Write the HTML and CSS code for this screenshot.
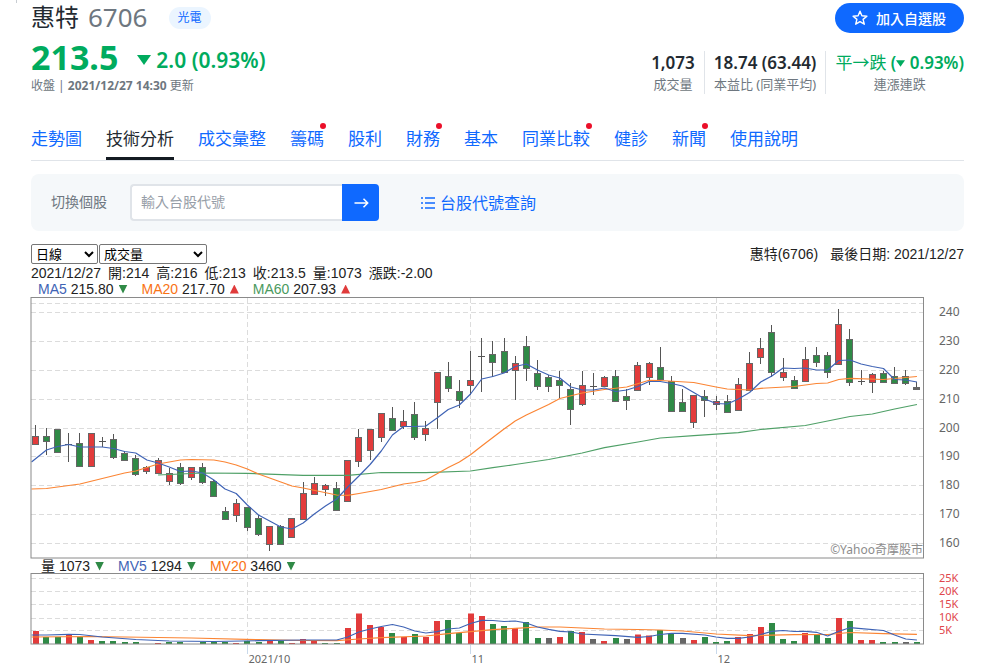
FILE: index.html
```html
<!DOCTYPE html>
<html lang="zh-Hant">
<head>
<meta charset="utf-8">
<title>惠特 6706</title>
<link rel="stylesheet" href="styles.css">
</head>
<body>
<div class="page">
  <header class="head">
    <div class="title-row">
      <h1 class="name">惠特</h1>
      <span class="code">6706</span>
      <a class="tag" href="#">光電</a>
      <button class="follow" type="button">
        <svg class="star" viewBox="0 0 16 16" aria-hidden="true"><path d="M8 1.200l1.900 4.600 5 .4-3.800 3.200 1.200 4.800L8 11.600l-4.300 2.600 1.200-4.800L1.100 6.200l5-.4z"/></svg>
        加入自選股
      </button>
    </div>
    <div class="quote-row">
      <div class="quote">
        <div class="price-line">
          <span class="price">213.5</span>
          <span class="change"><svg class="drop" viewBox="0 0 14 10" aria-hidden="true"><path d="M0 0h14L7 10z"/></svg>2.0 (0.93%)</span>
        </div>
        <div class="updated">收盤 | <b>2021/12/27 14:30</b> 更新</div>
      </div>
      <dl class="stats">
        <div class="stat"><dt>成交量</dt><dd>1,073</dd></div>
        <div class="stat"><dt>本益比 (同業平均)</dt><dd>18.74 (63.44)</dd></div>
        <div class="stat stat-down"><dt>連漲連跌</dt><dd><span class="streak">平→跌</span> (<svg class="drop-small" viewBox="0 0 14 10" aria-hidden="true"><path d="M0 0h14L7 10z"/></svg> 0.93%)</dd></div>
      </dl>
    </div>
  </header>

  <nav class="tabs">
    <a class="tab" href="#">走勢圖</a>
    <a class="tab tab-on" href="#">技術分析</a>
    <a class="tab" href="#">成交彙整</a>
    <a class="tab tab-new" href="#">籌碼</a>
    <a class="tab" href="#">股利</a>
    <a class="tab tab-new" href="#">財務</a>
    <a class="tab" href="#">基本</a>
    <a class="tab tab-new" href="#">同業比較</a>
    <a class="tab" href="#">健診</a>
    <a class="tab tab-new" href="#">新聞</a>
    <a class="tab" href="#">使用說明</a>
  </nav>

  <form class="search">
    <label class="search-label" for="stock">切換個股</label>
    <div class="search-box">
      <input class="search-input" id="stock" type="text" placeholder="輸入台股代號">
      <button class="search-go" type="button" aria-label="查詢">
        <svg class="arrow" viewBox="0 0 16 16" aria-hidden="true"><path d="M1.500 8h13M10.500 3.800L14.700 8l-4.200 4.200"/></svg>
      </button>
    </div>
    <a class="lookup" href="#">
      <svg class="list" viewBox="0 0 16 14" aria-hidden="true"><path d="M1 2h2M5 2h10M1 7h2M5 7h10M1 12h2M5 12h10"/></svg>
      <span class="lookup-text">台股代號查詢</span>
    </a>
  </form>

  <main class="chart">
    <div class="controls">
      <select class="pick" aria-label="週期"><option>日線</option></select>
      <select class="pick pick-wide" aria-label="指標"><option>成交量</option></select>
      <div class="chart-title"><span>惠特(6706)</span><span>最後日期: 2021/12/27</span></div>
    </div>
    <div class="ohlc"><span>2021/12/27</span><span>開:214</span><span>高:216</span><span>低:213</span><span>收:213.5</span><span>量:1073</span><span>漲跌:-2.00</span></div>
    <div class="legend">
      <span class="key"><span class="blue">MA5</span> 215.80<i class="mark mark-down"></i></span>
      <span class="key"><span class="orange">MA20</span> 217.70<i class="mark mark-up"></i></span>
      <span class="key"><span class="green">MA60</span> 207.93<i class="mark mark-up"></i></span>
    </div>
    <svg class="plot" id="price-plot" viewBox="31 297 933 262" role="img" aria-label="日線圖"></svg>
    <div class="legend legend-volume">
      <span class="key">量 1073<i class="mark mark-down"></i></span>
      <span class="key"><span class="blue">MV5</span> 1294<i class="mark mark-down"></i></span>
      <span class="key"><span class="orange">MV20</span> 3460<i class="mark mark-down"></i></span>
    </div>
    <svg class="plot" id="volume-plot" viewBox="31 573 933 94" role="img" aria-label="成交量圖"></svg>
  </main>
</div>
<script src="chart.js"></script>
</body>
</html>
```

FILE: styles.css
```css
* { box-sizing: border-box; }

body {
  margin: 0;
  background: #fff;
  color: #232a31;
  font-family: "Noto Sans", "Noto Sans CJK TC", sans-serif;
  overflow-x: hidden;
}

a { color: #0f69ff; text-decoration: none; }
button, input, select { font: inherit; margin: 0; }
h1, dl, dd { margin: 0; }

.page { position: relative; padding: 0 36px 0 31px; }

.page::before {
  content: "";
  position: absolute;
  left: 16px;
  top: 0;
  width: 1px;
  height: 3px;
  background: #c8cdd2;
}

/* Header */
.title-row { display: flex; align-items: center; height: 36px; }
.name { font-size: 24px; line-height: 32px; font-weight: 400; padding-bottom: 2px; }
.code { margin-left: 9px; font-size: 26px; line-height: 32px; padding-bottom: 2px; color: #6e7780; }
.tag {
  margin-left: 21px;
  padding: 0 9px;
  border-radius: 11px;
  background: #ebf5ff;
  font-size: 12px;
  line-height: 22px;
}
.follow {
  display: flex;
  align-items: center;
  gap: 8px;
  height: 30px;
  margin-left: auto;
  padding: 0 18px 0 17px;
  border: 0;
  border-radius: 15px;
  background: #0f69ff;
  color: #fff;
  font-size: 14px;
  font-weight: 500;
}
.star { width: 16px; height: 16px; fill: none; stroke: #fff; stroke-width: 1.4; stroke-linejoin: round; }

.quote-row { display: flex; justify-content: space-between; align-items: flex-end; }
.price-line { display: flex; align-items: center; height: 41px; color: #00ab5e; font-weight: 700; }
.price { font-size: 34px; line-height: 40px; }
.change { display: flex; align-items: center; margin-left: 19px; font-size: 21px; font-weight: 600; line-height: 28px; padding-top: 6px; }
.drop { width: 14px; height: 10px; margin-right: 5px; fill: currentColor; }
.updated { font-size: 12px; line-height: 18px; color: #6e7780; }
.updated b { font-weight: 700; }

.stats { display: flex; padding-bottom: 1px; }
.stat {
  display: flex;
  flex-direction: column-reverse;
  align-items: center;
  padding: 0 9px;
  border-left: 1px solid #e0e4e9;
}
.stat:first-child { border-left: 0; }
.stat:last-child { padding-right: 0; }
.stat dt { font-size: 13px; line-height: 20px; color: #6e7780; }
.stat dd { font-size: 17px; line-height: 23px; font-weight: 600; white-space: nowrap; }
.stat-down dd { color: #00ab5e; }
.streak { font-weight: 400; }
.drop-small { width: 9px; height: 7px; fill: currentColor; vertical-align: 2px; }

/* Tabs */
.tabs { display: flex; gap: 24px; margin-top: 28px; border-bottom: 1px solid #e0e4e9; }
.tab { position: relative; padding-bottom: 2px; border-bottom: 3px solid transparent; font-size: 17px; line-height: 32px; white-space: nowrap; }
.tab-on { color: #232a31; border-bottom-color: #141b22; }
.tab-new::after {
  content: "";
  position: absolute;
  top: 0;
  right: -2px;
  width: 6px;
  height: 6px;
  border-radius: 50%;
  background: #eb0f29;
}

/* Stock switcher */
.search {
  display: flex;
  align-items: center;
  margin-top: 13px;
  padding: 10px 20px;
  border-radius: 8px;
  background: #f5f8fa;
}
.search-label { width: 79px; padding-bottom: 4px; font-size: 14px; color: #6e7780; }
.search-box { display: flex; width: 249px; height: 37px; }
.search-input {
  flex: 1;
  min-width: 0;
  padding: 0 9px 2px;
  border: 2px solid #e0e4e9;
  border-right: 0;
  border-radius: 4px 0 0 4px;
  background: #fff;
  font-size: 14px;
  outline: 0;
}
.search-input::placeholder { color: #979ea8; opacity: 1; }
.search-go { display: grid; place-items: center; width: 37px; padding: 0; border: 0; border-radius: 0 4px 4px 0; background: #0f69ff; }
.arrow { width: 16px; height: 16px; fill: none; stroke: #fff; stroke-width: 1.5; }
.lookup { display: flex; align-items: center; gap: 4px; margin-left: 41px; font-size: 16px; }
.lookup-text { padding-bottom: 2px; }
.list { width: 16px; height: 14px; stroke: currentColor; stroke-width: 1.6; }

/* Chart */
.chart { margin-top: 12px; font-family: "Liberation Sans", "Noto Sans CJK TC", sans-serif; font-size: 14px; line-height: 16px; color: #222; }
.controls { display: flex; align-items: center; height: 22px; }
.pick { width: 67px; height: 20px; margin-right: 1px; padding: 0; border: 1px solid #767676; border-radius: 2px; background: #fff; color: #000; font-size: 13px; }
.pick-wide { width: 108px; }
.chart-title { display: flex; gap: 12px; margin-left: auto; }
.ohlc { display: flex; gap: 7px; white-space: nowrap; }
.legend { display: flex; gap: 14px; padding-left: 7px; white-space: nowrap; }
.legend-volume { padding-left: 10px; line-height: 14px; }
.key { display: flex; align-items: center; white-space: pre; }
.blue { color: #3f63b5; }
.orange { color: #f97316; }
.green { color: #4b9a60; }
.mark { width: 9px; height: 9px; margin-left: 5px; }
.mark-up { background: #e03b3b; clip-path: polygon(50% 0, 100% 100%, 0 100%); }
.mark-down { background: #2f8a46; clip-path: polygon(0 0, 100% 0, 50% 100%); }

.plot { display: block; width: 100%; height: auto; overflow: visible; }
.frame { fill: none; stroke: #8a8a8a; stroke-width: 1; }
.grid { stroke: #dcdcdc; stroke-width: 1; stroke-dasharray: 5 3; }
.tick { stroke: #c9d9ea; stroke-width: 1; }
.wick { stroke: #555; stroke-width: 1; }
.body { stroke: #666; stroke-width: 1; }
.up { fill: #e23b3b; }
.down { fill: #2f8a46; }
.flat { fill: #666; }
.line { fill: none; stroke-width: 1.2; stroke-linejoin: round; }
.line-blue { stroke: #3f63b5; }
.line-orange { stroke: #fb8534; }
.line-green { stroke: #4fa067; }
.axis { font: 12px "Noto Sans", sans-serif; fill: #666; }
.axis-volume { font-size: 11px; fill: #e0454b; }
.axis-date { font-size: 11px; }
.credit { font: 12px "Noto Sans", "Noto Sans CJK TC", sans-serif; fill: #8c8c8c; text-anchor: end; }
```

FILE: chart.js
```js
const LEFT = 35.3, STEP = 11.16;
const xAt = i => LEFT + i * STEP;

// Each candle: high, body top, body bottom, low, direction
const candles = [
  [425,437,444,444,'u'],[428,437,441,455,'d'],[429,430,452,452,'d'],[433,444,444,462,'f'],[433,444,466,466,'d'],
  [434,434,466,467,'u'],[437,441,441,447,'f'],[434,440,457,459,'d'],[451,454,460,460,'d'],[455,459,474,476,'d'],
  [466,468,471,474,'u'],[458,461,473,473,'u'],[468,474,481,485,'u'],[463,468,483,485,'d'],[468,468,477,480,'u'],
  [463,468,482,484,'d'],[480,482,496,496,'d'],[507,512,519,519,'d'],[499,504,515,522,'u'],[508,508,527,531,'d'],
  [515,519,534,536,'d'],[527,527,544,551,'u'],[525,527,544,544,'d'],[518,519,537,537,'u'],[482,494,519,519,'u'],
  [477,484,494,494,'u'],[484,486,489,496,'u'],[482,489,510,510,'d'],[461,461,501,501,'u'],[429,438,461,467,'u'],
  [430,430,450,460,'u'],[414,414,437,442,'u'],[407,419,430,430,'d'],[410,422,426,429,'u'],[402,415,437,440,'d'],
  [421,429,434,441,'u'],[373,373,402,429,'u'],[362,377,388,392,'d'],[380,392,400,408,'d'],[351,381,385,395,'u'],
  [338,356,356,392,'f'],[341,355,362,377,'d'],[338,352,372,372,'d'],[356,364,370,400,'u'],[336,347,368,381,'d'],
  [360,374,386,390,'d'],[375,378,386,392,'d'],[371,381,385,398,'d'],[383,390,409,425,'d'],[371,386,404,406,'u'],
  [373,386,386,395,'f'],[376,378,386,386,'u'],[370,377,401,402,'d'],[389,397,400,410,'d'],[362,366,390,391,'u'],
  [362,364,377,385,'u'],[347,368,379,379,'d'],[376,382,411,411,'d'],[389,403,411,411,'d'],[395,396,422,428,'u'],
  [390,397,400,417,'d'],[396,402,404,410,'u'],[395,402,412,412,'d'],[378,385,410,410,'u'],[352,364,390,390,'u'],
  [338,349,357,364,'u'],[325,333,372,377,'d'],[358,373,377,381,'u'],[376,381,388,388,'d'],[347,360,381,381,'u'],
  [347,356,362,367,'d'],[352,356,372,378,'d'],[309,325,364,364,'u'],[329,340,382,386,'d'],[370,381,381,385,'f'],
  [373,375,382,393,'u'],[371,374,382,382,'d'],[367,377,383,383,'d'],[370,377,383,385,'d'],[382,388,389,389,'f']
];

// Moving averages as [index, y]
const ma5 = [462,450,446.5,444.5,447,447,447,448.5,451.5,453,460,463,467,471.5,471,473,480,489,493.5,505,515,521,527,529,523,514,506,499,487,476,464.5,451,435,426.5,426.5,426,418,409.5,405,394,379,376.5,373,366.5,364,370,375,378,387,390,390,388,391.5,390,386.5,381.5,381.5,383.5,386,392.5,399,403.5,404,399,392.5,382,376,368,368.5,368,370,370,360.5,360,364,366.5,368.5,379.5,380,382].map((y, i) => [i, y]);
const ma20 = [[0,489],[1,488.5],[4,484],[8,473],[9,471],[11,464],[13,460],[14,459.5],[16,460],[17,462],[18,465],[19,469],[20,474],[22,482],[23,486],[24,488],[27,495],[28,495.3],[29,493.5],[31,489.5],[33,484],[34,482.5],[35,480],[37,467.5],[38,462],[39,454.7],[40,446],[42,429],[43,421],[44,415],[46,404.5],[47,398.5],[49,393],[51,389.5],[53,387],[55,380.3],[56,380.5],[59,382.5],[61,387],[62,389],[64,390],[65,388.3],[68,386.5],[70,383.5],[71,383],[72,379.5],[73,378.3],[76,379.5],[79,376.5]];
const ma60 = [[11,475],[15,473],[19,473.3],[24,475.3],[28,475.3],[31,472.5],[35,472.7],[39,471],[41,467.7],[43,464.5],[46,459.5],[49,453],[51,447.7],[54,442],[56,438],[59,435.7],[63,432.7],[65,429.5],[69,425.5],[71,421],[73,416.5],[75,414],[77,409],[79,404.5]];

// Each bar: top y, direction
const volumes = [
  [631,'u'],[637,'d'],[637,'d'],[635,'u'],[637,'d'],[640,'u'],[641,'d'],[641,'d'],[642,'d'],[642,'d'],
  [644,'u'],[643,'u'],[642,'d'],[642,'d'],[644,'u'],[642,'d'],[642,'d'],[642,'d'],[643,'u'],[641,'d'],
  [642,'d'],[641,'u'],[641,'d'],[643,'u'],[639,'u'],[641,'u'],[643,'d'],[643,'d'],[628,'u'],[613.5,'u'],
  [625,'u'],[627,'u'],[633,'d'],[637,'u'],[634,'d'],[637,'u'],[621,'u'],[620,'d'],[633,'d'],[613.5,'u'],
  [616,'u'],[624,'d'],[626,'d'],[628,'u'],[622,'d'],[638,'d'],[638,'f'],[637,'u'],[631,'d'],[632,'u'],
  [639,'f'],[641,'u'],[638,'d'],[639,'f'],[634.5,'u'],[635.5,'u'],[630,'d'],[634,'d'],[638,'f'],[640,'u'],
  [637,'d'],[642,'d'],[641,'d'],[637,'u'],[634,'u'],[627,'u'],[623,'d'],[639,'d'],[641,'d'],[633,'u'],
  [635,'d'],[638,'d'],[618,'u'],[621,'d'],[640,'u'],[640,'u'],[642,'d'],[642,'d'],[642,'f'],[642,'d']
];
const mv5 = [[0,635],[1,635],[3,634.3],[4,634.5],[6,637],[9,639.5],[12,641],[16,641.5],[20,640.7],[24,640],[27,640],[28,637],[29,632],[30,629],[31,626.5],[32,624.5],[33,627],[34,631],[35,633],[36,631.7],[37,629],[38,628],[39,623.5],[40,620.3],[41,620.5],[42,621.5],[43,621],[44,623],[45,627],[46,629.3],[47,631.3],[48,632],[49,634],[52,635.7],[54,637.3],[55,636.5],[56,634.5],[57,633.3],[58,633.3],[60,635],[61,637],[62,638.3],[63,638.3],[64,637],[65,634.5],[66,631.3],[67,630.5],[68,631.5],[69,631.3],[70,632.3],[71,636],[72,631.3],[73,627.7],[74,628.7],[76,630.5],[77,635],[78,639],[79,640]];
const mv20 = [[0,637],[5,636.5],[14,638],[20,639.7],[24,640.5],[27,640.7],[29,639],[31,637.7],[35,636],[37,633.7],[39,631.7],[41,629.7],[43,628.3],[45,627],[47,627],[49,628],[51,629],[54,629.5],[56,630],[58,631],[61,634],[64,635.7],[68,634.7],[71,634.5],[73,632.5],[76,633.7],[79,634.3]];

const tone = { u: 'up', d: 'down', f: 'flat' };
const hline = (x1, x2, y, cls) => `<line class="${cls}" x1="${x1}" x2="${x2}" y1="${y}" y2="${y}"/>`;
const vline = (x, y1, y2, cls) => `<line class="${cls}" x1="${x}" x2="${x}" y1="${y1}" y2="${y2}"/>`;
const series = (pts, cls) =>
  `<polyline class="line ${cls}" points="${(pts[0][0] === 0 ? `31.5,${pts[0][1]} ` : '') + pts.slice(pts[0][0] === 0 ? 1 : 0).map(([i, y]) => `${xAt(i)},${y}`).join(' ')}"/>`;
const months = [[247.5, '2021/10'], [470.5, '11'], [716.5, '12']];

let price = hline(31, 923, 303.5, 'grid');
[312, 341, 370, 399, 428, 456, 485, 514, 543].forEach((y, n) => {
  price += hline(31, 923, y + 0.5, 'grid') + `<text class="axis" x="939" y="${y + 4}">${240 - n * 10}</text>`;
});
months.forEach(([x]) => { price += vline(x, 298, 558, 'grid'); });
candles.forEach(([hi, top, bottom, lo, dir], i) => {
  const c = Math.floor(xAt(i)) + 0.5;
  price += vline(c, hi, lo, 'wick');
  price += top === bottom
    ? hline(c - 3.5, c + 3.5, top + 0.5, 'wick')
    : `<rect class="body ${tone[dir]}" x="${c - 3}" y="${top - 0.5}" width="6" height="${bottom - top + 1}"/>`;
});
price += series(ma60, 'line-green') + series(ma20, 'line-orange') + series(ma5, 'line-blue');
price += '<rect class="frame" x="31" y="297.5" width="892.5" height="260.5"/><text class="credit" x="923" y="554">©Yahoo奇摩股市</text>';
document.getElementById('price-plot').innerHTML = price;

let volume = '';
[578, 591, 604, 618, 630].forEach((y, n) => {
  volume += hline(31, 923, y + 0.5, 'grid') + `<text class="axis axis-volume" x="939" y="${582 + n * 13}">${25 - n * 5}K</text>`;
});
months.forEach(([x, name]) => {
  volume += vline(x, 574, 644, 'grid') + vline(x, 645, 654, 'tick') + `<text class="axis axis-date" x="${x + 1}" y="663">${name}</text>`;
});
volumes.forEach(([top, dir], i) => {
  volume += `<rect class="${tone[dir]}" x="${Math.round(xAt(i)) - (i ? 3 : 2)}" y="${top}" width="6" height="${644 - top}"/>`;
});
volume += series(mv20, 'line-orange') + series(mv5, 'line-blue');
volume += '<rect class="frame" x="31" y="573.5" width="892.5" height="70.5"/>';
document.getElementById('volume-plot').innerHTML = volume;
```
